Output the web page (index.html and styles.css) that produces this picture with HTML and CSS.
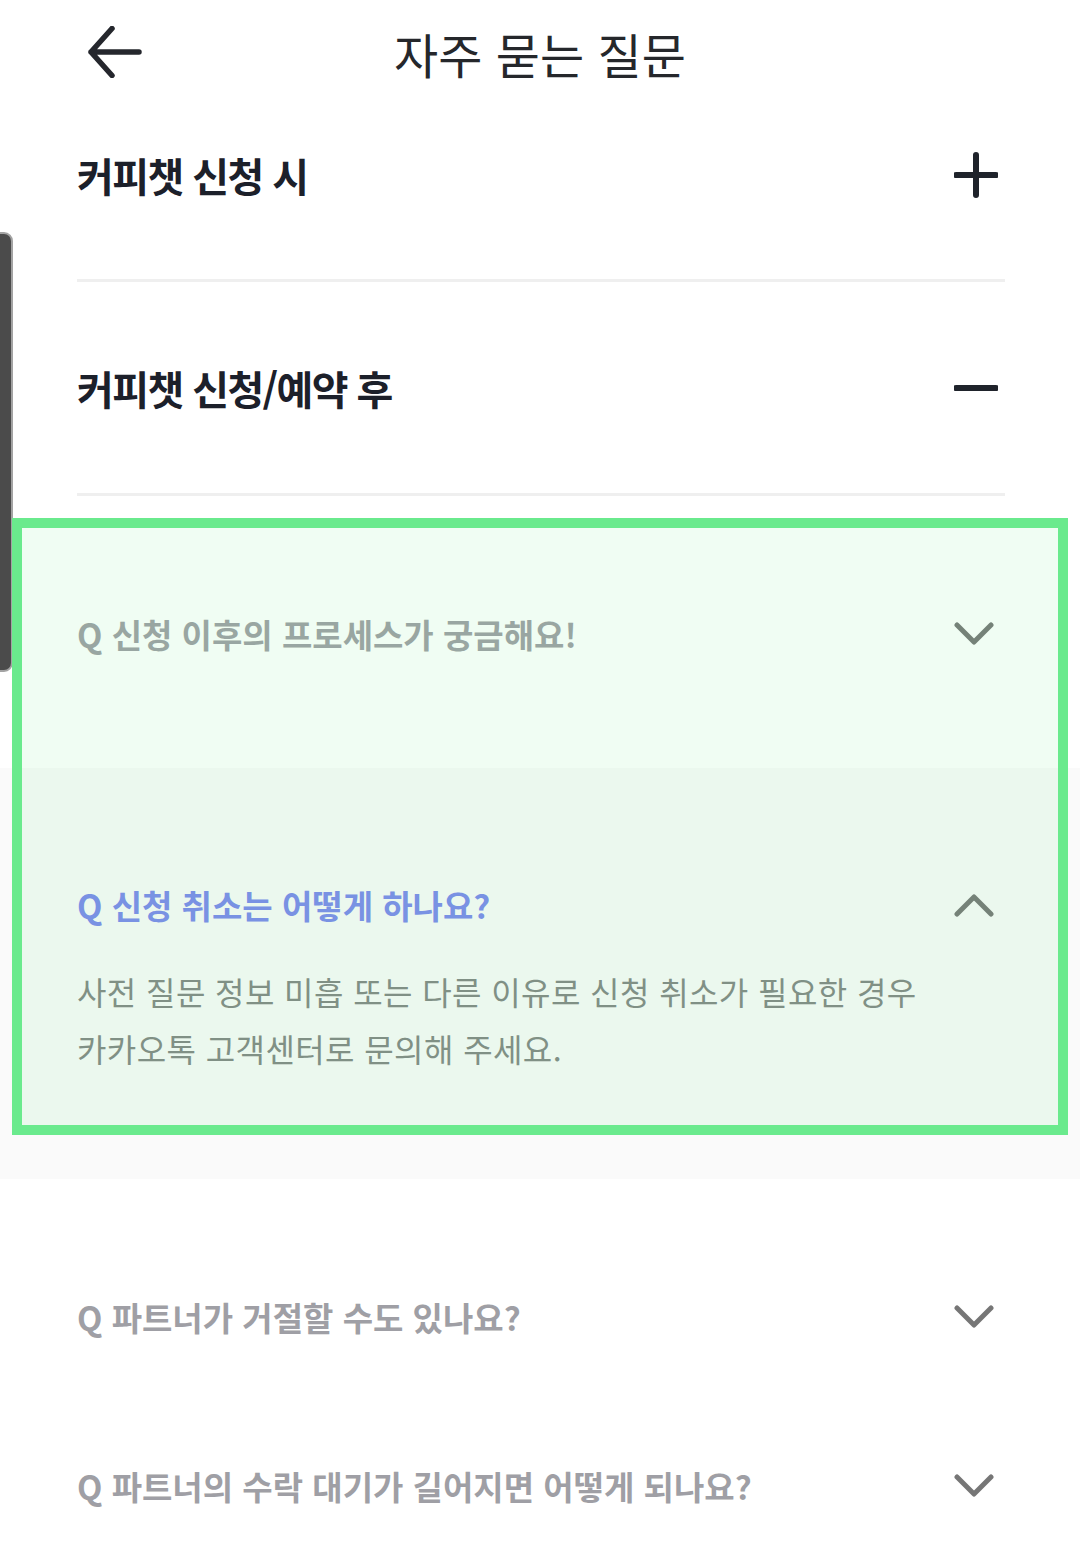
FILE: index.html
```html
<!DOCTYPE html>
<html lang="ko">
<head>
    <meta charset="UTF-8">
    <meta name="viewport" content="width=device-width, initial-scale=1.0">
    <title>자주 묻는 질문</title>
    <link rel="stylesheet" href="styles.css">
</head>
<body>
    <div id="header">
        <a href="" class="back">
            <svg width="54" height="52" viewBox="0 0 54 52"><path d="M24 2.5 L3 26 L24 49.5 M3 26 H51"/></svg>
        </a>
        <h1 class="title">자주 묻는 질문</h1>
        <div></div>
    </div>

    <div class="faq-page">
        <div class="group first">
            <div class="group-head">
                <h2>커피챗 신청 시</h2>
                <svg class="icon-toggle" width="44" height="46" viewBox="0 0 44 46"><path d="M22 3 V43 M2 23 H42"/></svg>
            </div>
        </div>
        <div class="group">
            <div class="group-head">
                <h2>커피챗 신청/예약 후</h2>
                <svg class="icon-toggle" width="44" height="46" viewBox="0 0 44 46"><path d="M2 23 H42"/></svg>
            </div>
        </div>
    </div>

    <div class="qa-list">
        <div class="qa">
            <div class="qa-q">
                <span>Q 신청 이후의 프로세스가 궁금해요!</span>
                <svg class="chevron" width="40" height="26" viewBox="0 0 40 26"><path d="M3 4 L20 21 L37 4"/></svg>
            </div>
        </div>
        <div class="qa open">
            <div class="qa-q">
                <span>Q 신청 취소는 어떻게 하나요?</span>
                <svg class="chevron" width="40" height="26" viewBox="0 0 40 26"><path d="M3 22 L20 5 L37 22"/></svg>
            </div>
            <p class="qa-a">사전 질문 정보 미흡 또는 다른 이유로 신청 취소가 필요한 경우<br>카카오톡 고객센터로 문의해 주세요.</p>
        </div>
        <div class="qa">
            <div class="qa-q">
                <span>Q 파트너가 거절할 수도 있나요?</span>
                <svg class="chevron" width="40" height="26" viewBox="0 0 40 26"><path d="M3 4 L20 21 L37 4"/></svg>
            </div>
        </div>
        <div class="qa">
            <div class="qa-q">
                <span>Q 파트너의 수락 대기가 길어지면 어떻게 되나요?</span>
                <svg class="chevron" width="40" height="26" viewBox="0 0 40 26"><path d="M3 4 L20 21 L37 4"/></svg>
            </div>
        </div>
    </div>

    <!-- overlays -->
    <div class="edge-tab"></div>
    <div class="highlight"></div>
</body>
</html>
```

FILE: styles.css
```css
:root{
    --text-dark: #1c202a;
    --divider: #efefef;
    --q-gray: #9f9fa5;
    --q-blue: #7b88ee;
    --answer-gray: #838685;
    --chevron: #767676;
    --side: 77px;
}
html,body{
    margin: 0;
    padding: 0;
    background: #fff;
    font-family: "Noto Sans CJK KR", "Noto Sans", sans-serif;
    color: var(--text-dark);
}

/* ==========
    Header
   ========== */
#header{
    height: 110px;
    display: grid;
    grid-template-columns: 1fr auto 1fr;
    align-items: center;
    padding-left: 88px;
    padding-right: 88px;
}
#header .back{
    display: flex;
    margin-top: -6px;
}
#header .back svg path{
    fill: none;
    stroke: #25272d;
    stroke-width: 5.5;
    stroke-linecap: round;
    stroke-linejoin: round;
}
#header .title{
    margin: 0 0 4px;
    font-size: 48px;
    font-weight: 400;
    letter-spacing: 0;
    color: #25272b;
}

/* ==========
    Category groups
   ========== */
.faq-page{
    padding: 0 75px 0 var(--side);
}
.group-head{
    height: 214px;
    display: flex;
    justify-content: space-between;
    align-items: center;
    border-bottom: 3px solid var(--divider);
    box-sizing: border-box;
}
.group.first .group-head{
    height: 172px;
    padding-bottom: 40px;
}
.group-head h2{
    margin: 0;
    font-size: 40px;
    font-weight: 700;
    letter-spacing: -1.6px;
}
.icon-toggle{
    margin-right: 7px;
}
.icon-toggle path{
    fill: none;
    stroke: #1f232b;
    stroke-width: 6;
    stroke-linecap: round;
}

/* ==========
    Q&A list
   ========== */
.qa-list{
    padding-top: 53px;
}
.qa{
    padding: 66.5px 86px 66.5px var(--side);
}
.qa-q{
    display: flex;
    justify-content: space-between;
    align-items: center;
    height: 36px;
    font-size: 33px;
    font-weight: 700;
    letter-spacing: 0;
    color: var(--q-gray);
}
.chevron path{
    fill: none;
    stroke: var(--chevron);
    stroke-width: 5;
    stroke-linecap: round;
    stroke-linejoin: round;
}
.qa.open{
    background: #fafafa;
    margin: 50px 0 53px;
    padding-top: 119px;
    padding-bottom: 102px;
}
.qa.open .qa-q{
    color: var(--q-blue);
}
.qa-a{
    margin: 40px 0 0;
    font-size: 32px;
    line-height: 57px;
    font-weight: 400;
    letter-spacing: 0.4px;
    color: var(--answer-gray);
}

/* ==========
    Overlays
   ========== */
.edge-tab{
    position: absolute;
    left: -10px;
    top: 232px;
    width: 19px;
    height: 436px;
    background: #4b4b4b;
    border: 2px solid #a3a3a3;
    border-radius: 9px;
}
.highlight{
    position: absolute;
    left: 12px;
    top: 518px;
    width: 1036px;
    height: 597px;
    border: 10px solid #6aea8d;
    background: rgba(106, 234, 141, 0.1);
}
```
